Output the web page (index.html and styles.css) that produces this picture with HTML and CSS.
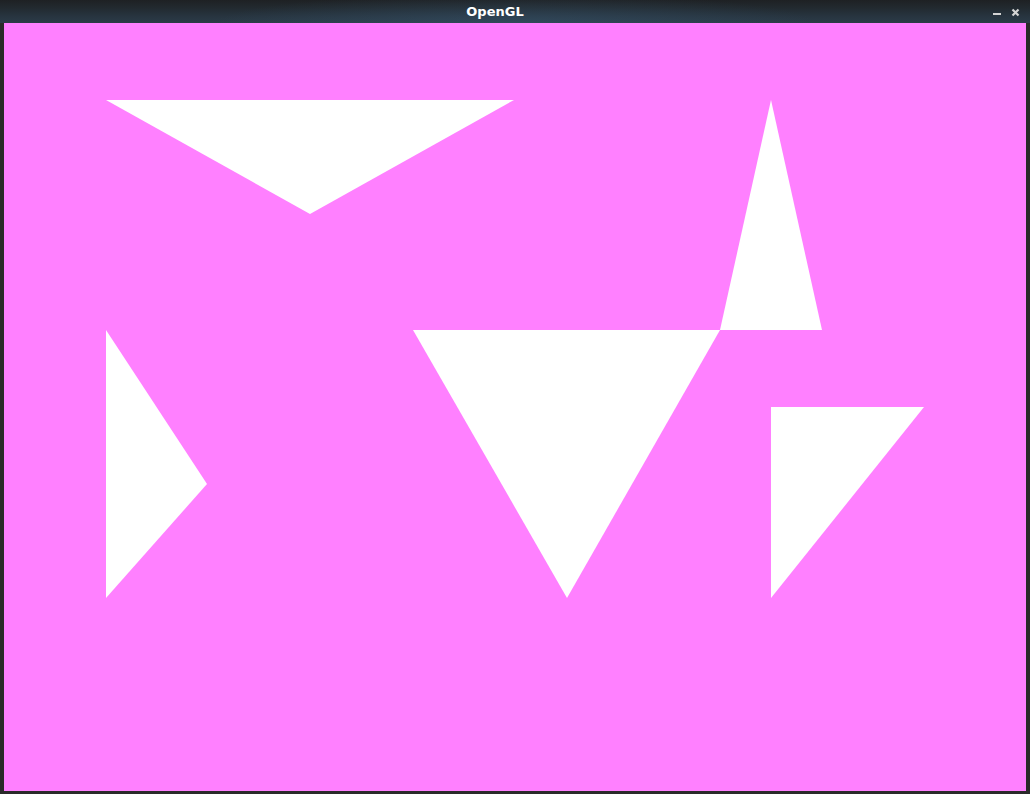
FILE: index.html
```html
<!DOCTYPE html>
<html>
<head>
<meta charset="utf-8">
<link rel="stylesheet" href="styles.css">
</head>
<body>
<div class="window">
  <div class="titlebar">
    <span class="title">OpenGL</span>
    <svg class="controls" width="30" height="12" viewBox="0 0 30 12">
      <rect x="2" y="6" width="8" height="2" fill="#d4d4d4"/>
      <path d="M21.5 2.5 L27.5 8.5 M27.5 2.5 L21.5 8.5" stroke="#d4d4d4" stroke-width="2.2"/>
    </svg>
  </div>
  <div class="frame">
    <svg class="canvas" width="1022" height="768" viewBox="0 0 1022 768">
      <rect width="1022" height="768" fill="#ff80ff"/>
      <polygon points="102,77 510,77 306,191" fill="#fff"/>
      <polygon points="767,77 716,307 818,307" fill="#fff"/>
      <polygon points="102,307 102,575 203,461" fill="#fff"/>
      <polygon points="409,307 716,307 563,575" fill="#fff"/>
      <polygon points="767,384 920,384 767,575" fill="#fff"/>
    </svg>
  </div>
</div>
</body>
</html>
```
FILE: styles.css
```css
html, body {
  margin: 0;
  padding: 0;
  background: #2b2b2b;
}
.window {
  width: 1030px;
  height: 794px;
  display: flex;
  flex-direction: column;
  background: #2a2a2a;
}
.titlebar {
  height: 23px;
  position: relative;
  background:
    radial-gradient(ellipse 300px 30px at 50% 100%, rgba(55, 85, 110, 0.5), rgba(55, 85, 110, 0) 100%),
    linear-gradient(to bottom, #1e2124 0%, #222a30 35%, #27343f 70%, #2b3b48 100%);
  display: flex;
  align-items: center;
  justify-content: center;
  flex-shrink: 0;
}
.title {
  font-family: "DejaVu Sans", sans-serif;
  font-weight: bold;
  font-size: 13px;
  color: #ffffff;
  margin-left: -40px;
}
.controls {
  position: absolute;
  left: 991px;
  top: 7px;
  display: block;
}
.frame {
  padding: 0 4px 3px 4px;
  flex: 1;
}
.canvas {
  display: block;
}
```
